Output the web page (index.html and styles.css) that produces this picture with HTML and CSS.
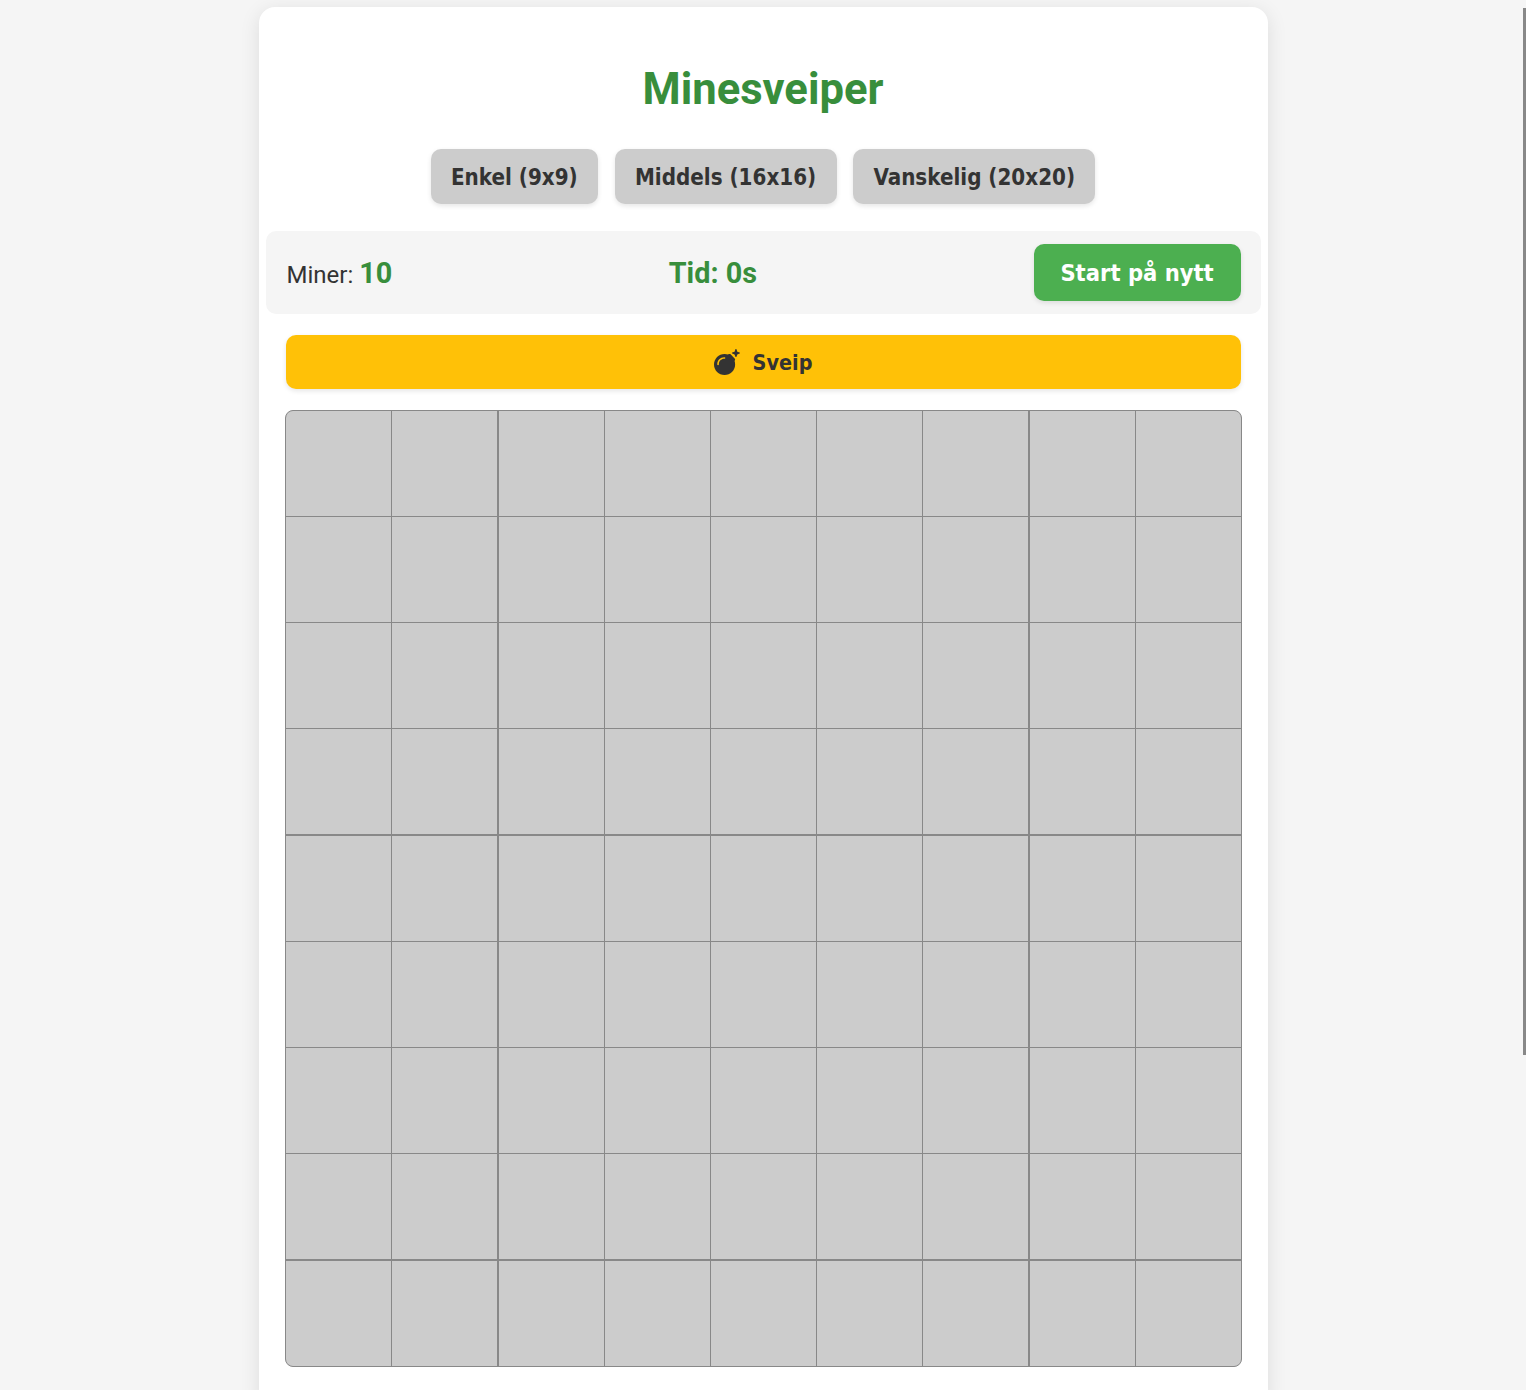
FILE: index.html
```html
<!DOCTYPE html>
<html>
<head>
  <title>Minesveiper</title>
  <meta charset="UTF-8">
  <meta name="viewport" content="width=device-width, initial-scale=1.0">
  <link rel="stylesheet" href="styles.css">
</head>
<body>
  <div class="container">
    <h1>Minesveiper</h1>

    <div class="levels">
      <button class="level-btn">Enkel (9x9)</button>
      <button class="level-btn">Middels (16x16)</button>
      <button class="level-btn">Vanskelig (20x20)</button>
    </div>

    <div class="info-panel">
      <div class="info-item mines">Miner: <span class="count">10</span></div>
      <div class="info-item timer">Tid: 0s</div>
      <button class="restart-btn">Start på nytt</button>
    </div>

    <button class="mode-btn">
      <svg class="mode-icon" viewBox="0 0 512 512" aria-hidden="true"><path d="M459.1 52.4L442.6 6.5C440.7 2.6 436.5 0 432.1 0s-8.5 2.6-10.4 6.5L405.2 52.4l-46 16.8c-4.3 1.6-7.3 5.9-7.2 10.4c0 4.5 3 8.7 7.2 10.2l45.7 16.8 16.8 45.8c1.5 4.4 5.8 7.5 10.4 7.5s8.9-3.1 10.4-7.5l16.5-45.8 45.7-16.8c4.2-1.5 7.2-5.7 7.2-10.2c0-4.6-3-8.9-7.2-10.4L459.1 52.4zm-132.4 53c-12.5-12.5-32.8-12.5-45.3 0l-2.9 2.9C256.5 100.3 232.7 96 208 96C93.1 96 0 189.1 0 304S93.1 512 208 512s208-93.1 208-208c0-24.7-4.3-48.5-12.2-70.5l2.9-2.9c12.5-12.5 12.5-32.8 0-45.3l-80-80zM200 192c-57.4 0-104 46.6-104 104v8c0 8.8-7.2 16-16 16s-16-7.2-16-16v-8c0-75.1 60.9-136 136-136h8c8.8 0 16 7.2 16 16s-7.2 16-16 16h-8z"/></svg>
      Sveip
    </button>

    <div class="board">
      <div class="cell"></div><div class="cell"></div><div class="cell"></div><div class="cell"></div><div class="cell"></div><div class="cell"></div><div class="cell"></div><div class="cell"></div><div class="cell"></div>
      <div class="cell"></div><div class="cell"></div><div class="cell"></div><div class="cell"></div><div class="cell"></div><div class="cell"></div><div class="cell"></div><div class="cell"></div><div class="cell"></div>
      <div class="cell"></div><div class="cell"></div><div class="cell"></div><div class="cell"></div><div class="cell"></div><div class="cell"></div><div class="cell"></div><div class="cell"></div><div class="cell"></div>
      <div class="cell"></div><div class="cell"></div><div class="cell"></div><div class="cell"></div><div class="cell"></div><div class="cell"></div><div class="cell"></div><div class="cell"></div><div class="cell"></div>
      <div class="cell"></div><div class="cell"></div><div class="cell"></div><div class="cell"></div><div class="cell"></div><div class="cell"></div><div class="cell"></div><div class="cell"></div><div class="cell"></div>
      <div class="cell"></div><div class="cell"></div><div class="cell"></div><div class="cell"></div><div class="cell"></div><div class="cell"></div><div class="cell"></div><div class="cell"></div><div class="cell"></div>
      <div class="cell"></div><div class="cell"></div><div class="cell"></div><div class="cell"></div><div class="cell"></div><div class="cell"></div><div class="cell"></div><div class="cell"></div><div class="cell"></div>
      <div class="cell"></div><div class="cell"></div><div class="cell"></div><div class="cell"></div><div class="cell"></div><div class="cell"></div><div class="cell"></div><div class="cell"></div><div class="cell"></div>
      <div class="cell"></div><div class="cell"></div><div class="cell"></div><div class="cell"></div><div class="cell"></div><div class="cell"></div><div class="cell"></div><div class="cell"></div><div class="cell"></div>
    </div>
  </div>

  <div class="scroll-thumb"></div>
</body>
</html>
```

FILE: styles.css
```css
html {
  overflow: hidden;
}

body {
  font-family: Roboto, sans-serif;
  background: #f5f5f5;
  margin: 0;
  color: #333;
}

.container {
  width: 1009px;
  margin: 7px auto 0;
  padding: 59px 7px 40px;
  background: #fff;
  border-radius: 16px;
  box-shadow: 0 4px 20px rgba(0, 0, 0, 0.1);
  box-sizing: border-box;
}

h1 {
  margin: 0 0 36px;
  text-align: center;
  font-size: 43.6px;
  line-height: 47px;
  font-weight: 700;
  color: #388e3c;
}

button {
  font-family: "DejaVu Sans", sans-serif;
  font-stretch: condensed;
  font-weight: 700;
  border: none;
  cursor: pointer;
}

.levels {
  display: flex;
  justify-content: center;
  gap: 16.5px;
  margin-bottom: 27px;
}

.level-btn {
  height: 55px;
  padding: 0 20.4px;
  background: #ccc;
  color: #333;
  font-size: 22.2px;
  border-radius: 10px;
  box-shadow: 0 2px 5px rgba(0, 0, 0, 0.1);
}

.info-panel {
  display: flex;
  justify-content: space-between;
  align-items: center;
  padding: 13px 20px 13px 21px;
  background: #f5f5f5;
  border-radius: 10px;
  margin-bottom: 21px;
}

.info-item {
  font-size: 24px;
}

.count,
.timer {
  font-size: 28.8px;
  font-weight: 700;
  color: #388e3c;
}

.restart-btn {
  width: 206.9px;
  height: 57px;
  background: #4caf50;
  color: #fff;
  font-size: 23.5px;
  border-radius: 10px;
  box-shadow: 0 2px 5px rgba(0, 0, 0, 0.1);
}

.mode-btn {
  display: flex;
  justify-content: center;
  align-items: center;
  gap: 13px;
  width: 955px;
  height: 54px;
  margin: 0 20px 21px;
  background: #ffc107;
  color: #333;
  font-size: 21.4px;
  border-radius: 10px;
  box-shadow: 0 2px 5px rgba(0, 0, 0, 0.1);
}

.mode-icon {
  width: 26px;
  height: 26px;
  fill: #333;
}

/* tracks stay 105px, the fractional gaps make some lines snap to 2px */
.board {
  display: grid;
  grid-template-columns: repeat(9, 105px);
  grid-template-rows: repeat(9, 105px);
  column-gap: 1.2px;
  row-gap: 1.25px;
  width: 957px;
  height: 957px;
  margin-left: 19.7px;
  margin-top: -0.3px;
  background: #888;
  border: 1px solid #888;
  border-radius: 8px;
  box-sizing: border-box;
  overflow: hidden;
}

.cell {
  background: #ccc;
}

.scroll-thumb {
  position: fixed;
  top: 8px;
  right: 0;
  width: 3px;
  height: 1047px;
  background: #888;
}
```
